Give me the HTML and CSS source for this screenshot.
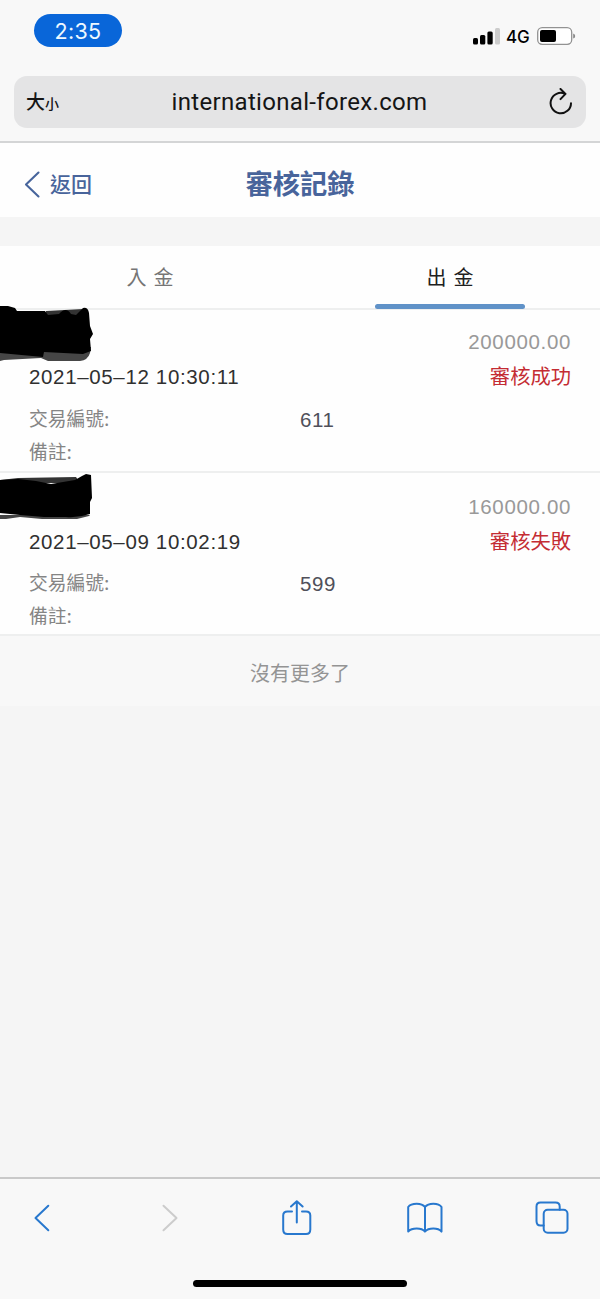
FILE: index.html
```html
<!DOCTYPE html>
<html lang="zh-Hant">
<head>
<meta charset="utf-8">
<title>審核記錄</title>
<link rel="stylesheet" href="styles.css">
</head>
<body>
<div class="phone">
  <header class="browser">
    <div class="status">
      <span class="clock">2:35</span>
      <div class="indicators">
        <svg class="signal" width="27" height="18" viewBox="0 0 27 18">
          <rect x="0" y="11" width="5" height="6.5" rx="1.5"/>
          <rect x="7" y="8" width="5.3" height="9.5" rx="1.5"/>
          <rect x="14.4" y="4.5" width="5.3" height="13" rx="1.5"/>
          <rect x="22" y="1" width="5" height="16.5" rx="1.5" fill="#ccc"/>
        </svg>
        <span class="network">4G</span>
        <svg class="battery" width="39" height="18" viewBox="0 0 39 18">
          <rect x=".7" y=".7" width="34" height="16.6" rx="4.5" fill="#fff" stroke="#929292" stroke-width="1.3"/>
          <rect x="3" y="3" width="16" height="12" rx="2"/>
          <path d="M36.2 6.5q2 .5 2 2.5t-2 2.5z" fill="#888"/>
        </svg>
      </div>
    </div>
    <div class="address">
      <span class="text-size">大<small>小</small></span>
      <span class="domain">international-forex.com</span>
      <svg class="reload" width="24" height="28" viewBox="0 0 24 28" fill="none" stroke="#111" stroke-width="2" stroke-linecap="round" stroke-linejoin="round">
        <path d="M22 15.2A10.2 10.2 0 1 1 16 5.8M11.5 1l5 4.9-5 5.2"/>
      </svg>
    </div>
  </header>

  <nav class="titlebar">
    <a class="back">
      <svg width="16" height="27" viewBox="0 0 16 27" fill="none" stroke="#47659c" stroke-width="2.1" stroke-linecap="round" stroke-linejoin="round"><path d="M14.5 1.5 2 13.5l12.5 12"/></svg>
      <span>返回</span>
    </a>
    <h1 class="title">審核記錄</h1>
  </nav>

  <div class="tabs">
    <div class="tab">入 金</div>
    <div class="tab active">出 金</div>
  </div>

  <main class="records">
    <section class="record">
      <svg class="scribble first" width="96" height="60" viewBox="0 0 96 60">
        <path d="M0 49 44 46H91L90 52Q88 59 80 60H48L41 57 4 59 0 60Z" fill="#464646"/>
        <path d="M46 10 83 8 89 20H46Z" fill="#333"/>
        <path d="M0 10V5L8 5 15 7 17 10 45 10 48 14 59 13Q66 5 71 13L76 14 83 7Q88 6 89 12L90 25 93 33 90 38 91 50 83 53 44 51 43 56 0 52Z"/>
      </svg>
      <div class="amount">200000.00</div>
      <div class="summary"><time>2021–05–12 10:30:11</time><span class="result">審核成功</span></div>
      <div class="detail number-row"><span>交易編號:</span><span class="number">611</span></div>
      <div class="detail"><span>備註:</span></div>
    </section>
    <section class="record second-record">
      <svg class="scribble second" width="96" height="50" viewBox="0 0 96 50">
        <path d="M0 42H90L89 43 77 46 66 46H42L20 44 6 46H0Z" fill="#444"/>
        <path d="M0 7 18 5 76 4 80 10H0Z" fill="#333"/>
        <path d="M0 7 18 6 36 8 51 11 75 7 82 3 86 1 91 2 92 25 90 29 90 41Q78 45 66 44L44 44 20 42 0 40Z"/>
      </svg>
      <div class="amount">160000.00</div>
      <div class="summary"><time>2021–05–09 10:02:19</time><span class="result">審核失敗</span></div>
      <div class="detail number-row"><span>交易編號:</span><span class="number">599</span></div>
      <div class="detail"><span>備註:</span></div>
    </section>
    <div class="end">沒有更多了</div>
  </main>

  <footer class="toolbar">
    <div class="tools">
      <span><svg width="16" height="28" viewBox="0 0 16 28"><path d="M14.3 1.8 1.5 14l12.8 12.2"/></svg></span>
      <span><svg class="disabled" width="16" height="28" viewBox="0 0 16 28"><path d="M1.5 1.8 14.5 14 1.5 26.2"/></svg></span>
      <span><svg width="30" height="36" viewBox="0 0 30 36"><path d="M10 11.5H5.5Q1.2 11.5 1.2 15.5V29.5Q1.2 34 5.5 34H24Q28.3 34 28.3 29.5V15.5Q28.3 11.5 24 11.5H20M14.8 22.5V1.2M9 6.5l5.8-5.3 5.8 5.3"/></svg></span>
      <span><svg width="36" height="32" viewBox="0 0 36 32"><path d="M18 5Q15.4 1.7 9.7 1.7 3.5 1.7 1.2 5V29.6Q4 26.6 9.7 26.6 15.4 26.6 18 29.6 20.6 26.6 26.3 26.6 32 26.6 34.5 29.6V5Q32.5 1.7 26.3 1.7 20.6 1.7 18 5ZM18 5V29.6"/></svg></span>
      <span><svg width="34" height="34" viewBox="0 0 34 34"><path d="M8.7 24.6H5.5Q1.5 24.6 1.5 20V5.5Q1.5 1.5 5.5 1.5H20.5Q24.7 1.5 24.7 5.5V8.8"/><rect x="8.7" y="8.8" width="23.8" height="23" rx="4"/></svg></span>
    </div>
    <div class="home-indicator"></div>
  </footer>
</div>
</body>
</html>
```
FILE: styles.css
```css
* { box-sizing: border-box; }
body {
  margin: 0;
  background: #f5f5f5;
  font-family: Inter, "Noto Sans CJK TC", sans-serif;
}
.phone {
  width: 600px;
  height: 1299px;
  display: flex;
  flex-direction: column;
  overflow: hidden;
}
.phone svg { display: block; flex: none; }
.browser {
  height: 143px;
  background: #f8f8f8;
  border-bottom: 2px solid #d4d5d6;
  padding: 14px 14px 0;
}
.status {
  height: 62px;
  display: flex;
  justify-content: space-between;
  align-items: flex-start;
  padding: 0 10px 0 20px;
}
.clock {
  width: 88px;
  height: 33px;
  border-radius: 17px;
  background: #0966d9;
  color: #eef8ff;
  font-size: 21.5px;
  line-height: 34px;
  letter-spacing: .3px;
  text-align: center;
}
.indicators {
  display: flex;
  align-items: center;
  padding-top: 13px;
  height: 31px;
}
.network {
  width: 24px;
  margin: 2px 7px 0 6px;
  font-size: 17px;
  font-weight: 500;
  letter-spacing: -.1px;
  line-height: 18px;
}
.address {
  height: 52px;
  border-radius: 13px;
  background: #e4e4e5;
  display: grid;
  grid-template-columns: 80px 1fr 80px;
  align-items: center;
  padding: 0 13px 0 12px;
  color: #151515;
}
.text-size { font-size: 19px; font-weight: 500; line-height: 28px; padding-top: 2px; white-space: nowrap; }
.text-size small { font-size: 14px; font-weight: 500; }
.domain {
  text-align: center;
  font-family: Roboto, sans-serif;
  font-size: 24px;
  letter-spacing: .32px;
  line-height: 28px;
}
.reload { justify-self: end; }
.titlebar {
  height: 74px;
  background: #fefefe;
  display: grid;
  grid-template-columns: 1fr auto 1fr;
  align-items: center;
  padding: 8px 24px 0;
  color: #48649b;
}
.back { display: flex; align-items: center; gap: 10px; font-size: 21px; font-weight: 500; line-height: 28px; }
.back span { padding-top: 2px; }
.title { margin: 0; padding-top: 2px; font-size: 27.3px; font-weight: 700; line-height: 36px; }
.tabs {
  height: 64px;
  margin-top: 29px;
  display: grid;
  grid-template-columns: 1fr 1fr;
  background: #fefefe;
  border-bottom: 2px solid #eeefef;
}
.tab {
  display: flex;
  flex-direction: column;
  align-items: center;
  font-size: 20px;
  line-height: 64px;
  color: #757575;
  word-spacing: 1.2px;
}
.active { color: #202020; }
.active::after {
  content: "";
  flex: none;
  width: 150px;
  height: 5px;
  margin-top: -6px;
  border-radius: 3px;
  background: #6092c8;
}
.record {
  position: relative;
  height: 163px;
  background: #fefefe;
  border-bottom: 2px solid #eeefef;
  padding: 17px 29px 0;
}
.second-record { padding-top: 19px; }
.scribble { position: absolute; left: 0; }
.first { top: -9px; }
.second { top: 0; }
.amount, time, .number {
  font-family: "Liberation Sans", sans-serif;
  font-size: 20.5px;
  letter-spacing: .65px;
}
.amount { line-height: 30px; text-align: right; color: #999; }
.summary {
  height: 40px;
  display: flex;
  justify-content: space-between;
  align-items: center;
  font-size: 20px;
  line-height: 40px;
  color: #303030;
}
.result { color: #c42c33; font-size: 20.3px; }
.detail {
  display: grid;
  grid-template-columns: 1fr 1fr;
  height: 32px;
  font-size: 18.8px;
  line-height: 34px;
  color: #858585;
}
.number-row { height: 33px; margin-top: 6px; }
.second-record .number-row { margin-top: 5px; }
.number { color: #50505a; }
.end {
  height: 70px;
  background: #f8f8f8;
  text-align: center;
  color: #949494;
  font-size: 20px;
  line-height: 76px;
}
.toolbar {
  margin-top: auto;
  height: 122px;
  background: #f8f8f8;
  border-top: 2px solid #c9c9c9;
  display: flex;
  flex-direction: column;
  align-items: center;
}
.tools {
  width: 100%;
  height: 78px;
  padding: 0 30px 0 24px;
  display: flex;
  align-items: center;
  justify-content: space-between;
}
.tools span { width: 36px; display: flex; justify-content: center; }
.tools path, .tools rect {
  fill: none;
  stroke: #2878ce;
  stroke-width: 2;
  stroke-linecap: round;
  stroke-linejoin: round;
}
.tools .disabled path { stroke: #ccc; }
.home-indicator {
  width: 214px;
  height: 7px;
  margin-top: 23px;
  border-radius: 4px;
  background: #000;
}
```
